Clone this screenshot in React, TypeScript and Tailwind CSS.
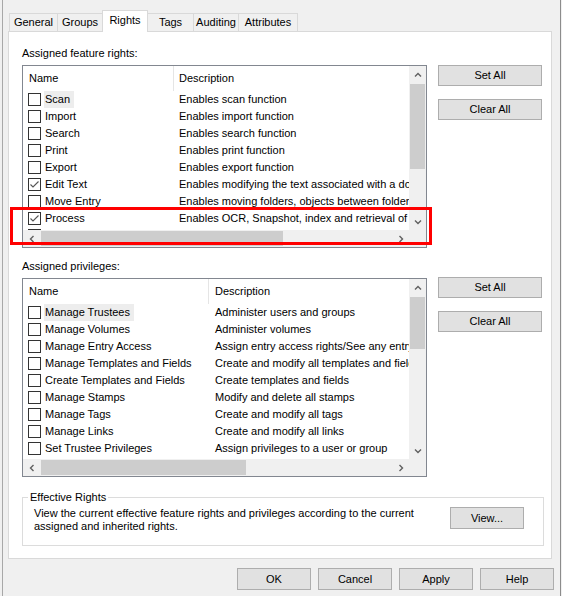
import React from "react";

type Row = { name: string; desc: string; on?: boolean };

const featureRows: Row[] = [
  { name: "Scan", desc: "Enables scan function" },
  { name: "Import", desc: "Enables import function" },
  { name: "Search", desc: "Enables search function" },
  { name: "Print", desc: "Enables print function" },
  { name: "Export", desc: "Enables export function" },
  { name: "Edit Text", desc: "Enables modifying the text associated with a document", on: true },
  { name: "Move Entry", desc: "Enables moving folders, objects between folders" },
  { name: "Process", desc: "Enables OCR, Snapshot, index and retrieval of text", on: true },
  { name: "Annotate", desc: "Enables annotation function" },
];

const privilegeRows: Row[] = [
  { name: "Manage Trustees", desc: "Administer users and groups" },
  { name: "Manage Volumes", desc: "Administer volumes" },
  { name: "Manage Entry Access", desc: "Assign entry access rights/See any entry" },
  { name: "Manage Templates and Fields", desc: "Create and modify all templates and fields" },
  { name: "Create Templates and Fields", desc: "Create templates and fields" },
  { name: "Manage Stamps", desc: "Modify and delete all stamps" },
  { name: "Manage Tags", desc: "Create and modify all tags" },
  { name: "Manage Links", desc: "Create and modify all links" },
  { name: "Set Trustee Privileges", desc: "Assign privileges to a user or group" },
];

function Arrow({ dir }: { dir: "up" | "down" | "left" | "right" }) {
  const vertical = dir === "up" || dir === "down";
  const pts = {
    up: "1,4.5 4,1.5 7,4.5",
    down: "1,1.5 4,4.5 7,1.5",
    left: "4.5,1 1.5,4 4.5,7",
    right: "1.5,1 4.5,4 1.5,7",
  }[dir];
  return (
    <svg width={vertical ? 8 : 6} height={vertical ? 6 : 8} viewBox={vertical ? "0 0 8 6" : "0 0 6 8"}>
      <polyline points={pts} fill="none" stroke="#606060" strokeWidth="1.4" />
    </svg>
  );
}

function CheckBox({ on }: { on?: boolean }) {
  return (
    <span className="w-[13px] h-[13px] shrink-0 border border-[#333333] bg-white flex items-center justify-center">
      {on && (
        <svg width="11" height="11" viewBox="0 0 11 11">
          <polyline points="1.5,5.5 4,8 9.5,2.5" fill="none" stroke="#555555" strokeWidth="1.1" />
        </svg>
      )}
    </span>
  );
}

function Btn({ children, className = "" }: { children: React.ReactNode; className?: string }) {
  return (
    <button className={`bg-[#e1e1e1] border border-[#adadad] text-black flex items-center justify-center ${className}`}>
      {children}
    </button>
  );
}

function ListBox({
  rows,
  height,
  nameW,
  descPad,
  vThumb,
  hThumb,
}: {
  rows: Row[];
  height: string;
  nameW: string;
  descPad: string;
  vThumb: string;
  hThumb: string;
}) {
  return (
    <div className={`w-[405px] ${height} border border-[#828790] bg-white flex flex-col`}>
      <div className="flex-1 flex min-h-0">
        <div className="flex-1 overflow-hidden">
          <div className="h-[25px] flex whitespace-nowrap">
            <div className={`${nameW} shrink-0 h-full flex items-center pl-[6px] border-r border-[#e5e5e5]`}>Name</div>
            <div className={`h-full flex items-center ${descPad}`}>Description</div>
          </div>
          {rows.map((r, i) => (
            <div key={r.name} className="h-[17px] flex items-center whitespace-nowrap">
              <div className={`${nameW} shrink-0 h-full flex items-center pl-[5px]`}>
                <CheckBox on={r.on} />
                <span className={`ml-[3px] h-full flex items-center pl-[1px] pr-[4px] ${i === 0 ? "bg-[#ededed]" : ""}`}>
                  {r.name}
                </span>
              </div>
              <div className={`h-full flex items-center ${descPad}`}>{r.desc}</div>
            </div>
          ))}
        </div>
        <div className="w-[17px] shrink-0 bg-[#f0f0f0] flex flex-col">
          <div className="h-[17px] flex items-center justify-center">
            <Arrow dir="up" />
          </div>
          <div className="flex-1 px-[1px] pt-[1px]">
            <div className={`${vThumb} bg-[#cdcdcd]`} />
          </div>
          <div className="h-[17px] flex items-center justify-center">
            <Arrow dir="down" />
          </div>
        </div>
      </div>
      <div className="h-[17px] shrink-0 flex bg-[#f0f0f0]">
        <div className="w-[17px] flex items-center justify-center">
          <Arrow dir="left" />
        </div>
        <div className="flex-1 py-[1px] pl-[1px]">
          <div className={`${hThumb} h-full bg-[#cdcdcd]`} />
        </div>
        <div className="w-[17px] flex items-center justify-center">
          <Arrow dir="right" />
        </div>
        <div className="w-[17px]" />
      </div>
    </div>
  );
}

export default function App() {
  const tabs = [
    { label: "General", w: "w-[49px]" },
    { label: "Groups", w: "w-[46px]" },
    { label: "Rights", w: "w-[46px]", active: true },
    { label: "Tags", w: "w-[47px]" },
    { label: "Auditing", w: "w-[46px]" },
    { label: "Attributes", w: "w-[60px]" },
  ];

  return (
    <div className="relative w-[562px] h-[596px] bg-[#f0f0f0] text-[11px] text-black font-['Liberation_Sans',Arial,sans-serif] overflow-hidden flex">
      <div className="w-[2px] shrink-0" />
      <div className="w-px shrink-0 bg-[#a8a8a8]" />
      <div className="w-[557px] shrink-0 flex flex-col pl-[5px]">
        {/* tabs */}
        <div className="h-[22px] mt-[10px] -mb-px flex items-end pl-[1px] relative z-10">
          {tabs.map((t, i) =>
            t.active ? (
              <div
                key={t.label}
                className={`${t.w} ${i ? "-ml-px" : ""} h-[22px] bg-white border-l border-t border-r border-[#d9d9d9] flex items-center justify-center pb-[2px]`}
              >
                {t.label}
              </div>
            ) : (
              <div
                key={t.label}
                className={`${t.w} ${i ? "-ml-px" : ""} h-[19px] bg-[#f0f0f0] border border-[#d9d9d9] flex items-center justify-center`}
              >
                {t.label}
              </div>
            )
          )}
        </div>

        {/* tab panel */}
        <div className="w-[544px] h-[528px] bg-white border border-[#d9d9d9] pt-[14px] pl-[13px]">
          <div className="h-[14px] leading-[14px]">Assigned feature rights:</div>
          <div className="mt-[5px] flex">
            <ListBox
              rows={featureRows}
              height="h-[183px]"
              nameW="w-[151px]"
              descPad="pl-[5px]"
              vThumb="h-[85px]"
              hThumb="w-[242px]"
            />
            <div className="ml-[11px] flex flex-col gap-[13px]">
              <Btn className="w-[104px] h-[21px]">Set All</Btn>
              <Btn className="w-[104px] h-[21px]">Clear All</Btn>
            </div>
          </div>

          <div className="mt-[11px] h-[14px] leading-[14px]">Assigned privileges:</div>
          <div className="mt-[5px] flex">
            <ListBox
              rows={privilegeRows}
              height="h-[199px]"
              nameW="w-[186px]"
              descPad="pl-[6px]"
              vThumb="h-[52px]"
              hThumb="w-[205px]"
            />
            <div className="ml-[11px] -mt-px flex flex-col gap-[13px]">
              <Btn className="w-[104px] h-[21px]">Set All</Btn>
              <Btn className="w-[104px] h-[21px]">Clear All</Btn>
            </div>
          </div>

          <fieldset className="mt-[13px] w-[522px] h-[56px] border border-[#dcdcdc] pl-[5px]">
            <legend className="px-[2px] h-[14px] leading-[14px]">Effective Rights</legend>
            <div className="flex items-start pt-[3px]">
              <div className="pl-[6px] leading-[13px]">
                View the current effective feature rights and privileges according to the current
                <br />
                assigned and inherited rights.
              </div>
              <Btn className="ml-auto mr-[19px] w-[74px] h-[22px]">View...</Btn>
            </div>
          </fieldset>
        </div>

        {/* dialog buttons */}
        <div className="w-[546px] mt-[9px] flex justify-end gap-[7px]">
          <Btn className="w-[74px] h-[22px]">OK</Btn>
          <Btn className="w-[74px] h-[22px]">Cancel</Btn>
          <Btn className="w-[74px] h-[22px]">Apply</Btn>
          <Btn className="w-[74px] h-[22px]">Help</Btn>
        </div>
      </div>
      <div className="w-px shrink-0 bg-[#8c8c8c]" />

      {/* annotation */}
      <div className="absolute left-[10px] top-[207px] w-[422px] h-[38px] border-[3px] border-[#ff0000] pointer-events-none" />
    </div>
  );
}
